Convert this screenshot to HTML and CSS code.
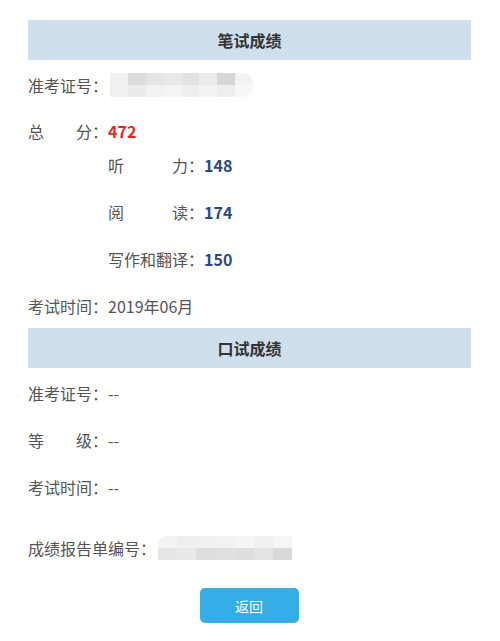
FILE: index.html
```html
<!DOCTYPE html>
<html lang="zh-CN">
<head>
<meta charset="utf-8">
<title>成绩查询</title>
<link rel="stylesheet" href="styles.css">
</head>
<body>
<div class="page">
  <div class="section-title">笔试成绩</div>

  <div class="row r-first">
    <span class="label">准考证号：</span>
    <span class="mosaic m1">
      <i style="background:#f1f1f1"></i><i style="background:#dcdcdc"></i><i style="background:#e4e4e4"></i><i style="background:#e9e9e9"></i><i style="background:#e2e2e2"></i><i style="background:#ececec"></i><i style="background:#d6d6d6"></i><i style="background:#f3f3f3"></i>
      <i style="background:#f0f0f0"></i><i style="background:#ebebeb"></i><i style="background:#f2f2f2"></i><i style="background:#f4f4f4"></i><i style="background:#efefef"></i><i style="background:#f3f3f3"></i><i style="background:#eeeeee"></i><i style="background:#f7f7f7"></i>
    </span>
  </div>

  <div class="row r-total">
    <span class="label just"><span>总</span><span>分：</span></span>
    <span class="score red">472</span>
  </div>

  <div class="row sub r-s1">
    <span class="sublabel just"><span>听</span><span>力：</span></span>
    <span class="score navy">148</span>
  </div>
  <div class="row sub">
    <span class="sublabel just"><span>阅</span><span>读：</span></span>
    <span class="score navy">174</span>
  </div>
  <div class="row sub">
    <span class="sublabel">写作和翻译：</span>
    <span class="score navy">150</span>
  </div>

  <div class="row">
    <span class="label">考试时间：</span>
    <span class="value">2019年06月</span>
  </div>

  <div class="section-title s2">口试成绩</div>

  <div class="row r-first">
    <span class="label">准考证号：</span>
    <span class="value">--</span>
  </div>
  <div class="row">
    <span class="label just"><span>等</span><span>级：</span></span>
    <span class="value">--</span>
  </div>
  <div class="row">
    <span class="label">考试时间：</span>
    <span class="value">--</span>
  </div>

  <div class="row r-report">
    <span class="label-wide">成绩报告单编号：</span>
    <span class="mosaic m2">
      <i style="background:#f3f3f3"></i><i style="background:#efefef"></i><i style="background:#f0f0f0"></i><i style="background:#f2f2f2"></i><i style="background:#f5f5f5"></i><i style="background:#f1f1f1"></i><i style="background:#f6f6f6"></i>
      <i style="background:#e6e6e6"></i><i style="background:#e9e9e9"></i><i style="background:#dddddd"></i><i style="background:#e0e0e0"></i><i style="background:#dedede"></i><i style="background:#e3e3e3"></i><i style="background:#d9d9d9"></i>
    </span>
  </div>

  <div class="actions">
    <button class="btn">返回</button>
  </div>
</div>
</body>
</html>
```

FILE: styles.css
```css
html, body {
  margin: 0;
  padding: 0;
  background: #ffffff;
}

body {
  font-family: "Noto Sans CJK SC", "Noto Sans", sans-serif;
  font-size: 16px;
  color: #555555;
}

.page {
  padding: 20px 29px 0 28px;
}

.section-title {
  height: 40px;
  line-height: 40px;
  background: #cfdfec;
  text-align: center;
  font-weight: bold;
  color: #333333;
  font-size: 16px;
}

.section-title.s2 {
  margin-top: 10px;
}

.row {
  display: flex;
  align-items: center;
  height: 24px;
  line-height: 24px;
  margin-top: 23px;
}

.row.r-first {
  margin-top: 13px;
}

.row.r-total {
  margin-top: 22px;
}

.row.sub {
  padding-left: 80px;
}

.row.r-s1 {
  margin-top: 10px;
}

.row.r-report {
  margin-top: 37px;
}

.label {
  width: 80px;
  flex: none;
}

.label-wide {
  width: 130px;
  flex: none;
}

.sublabel {
  width: 96px;
  flex: none;
}

.just {
  display: flex;
  justify-content: space-between;
}

.score {
  font-weight: bold;
  font-size: 16px;
}

.red {
  color: #e6261c;
}

.navy {
  color: #2c4a7e;
}

.value {
  color: #555555;
}

.mosaic {
  display: grid;
  height: 24px;
  border-radius: 0 10px 10px 0;
  overflow: hidden;
}

.mosaic.m1 {
  margin-left: 2px;
  width: 143px;
  grid-template-columns: repeat(8, 1fr);
  grid-template-rows: 1fr 1fr;
}

.mosaic.m2 {
  width: 134px;
  border-radius: 8px 0 0 0;
  grid-template-columns: repeat(7, 1fr);
  grid-template-rows: 1fr 1fr;
}

.mosaic i {
  display: block;
}

.actions {
  display: flex;
  justify-content: center;
  margin-top: 28px;
  padding-right: 1px;
}

.btn {
  width: 99px;
  height: 35px;
  border: none;
  border-radius: 5px;
  background: #35aee8;
  color: #ffffff;
  font-family: "Noto Sans CJK SC", "Noto Sans", sans-serif;
  font-size: 14px;
  padding: 0;
}
```
